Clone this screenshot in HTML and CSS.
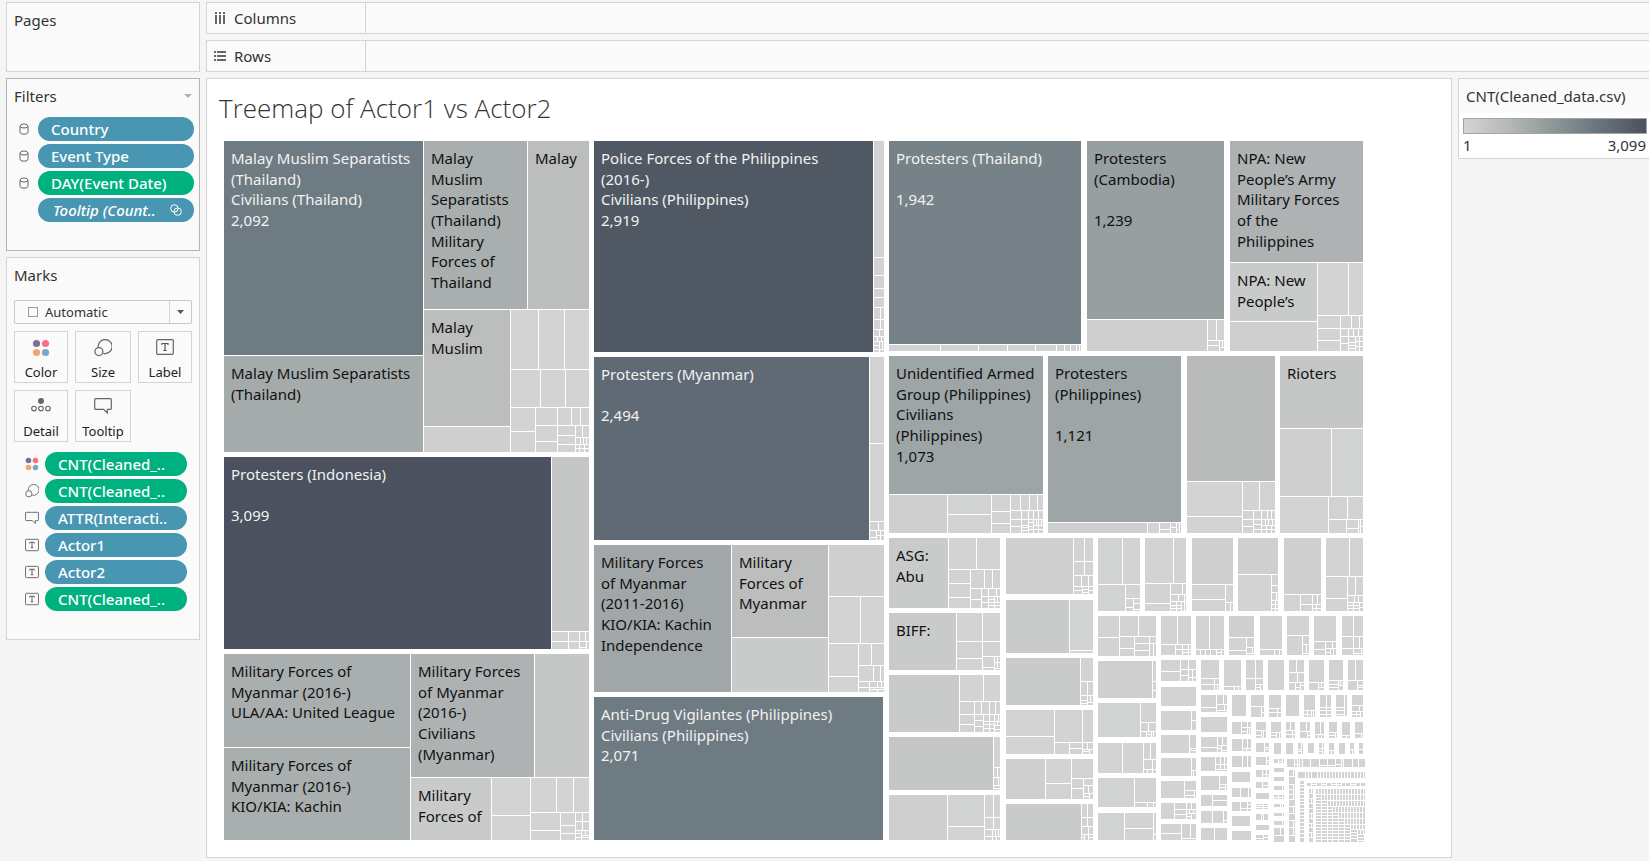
FILE: index.html
```html
<!DOCTYPE html>
<html lang="en">
<head>
<meta charset="utf-8">
<title>Treemap of Actor1 vs Actor2</title>
<link rel="stylesheet" href="styles.css">
</head>
<body>
<svg class="defs" aria-hidden="true">
  <symbol id="i-db" viewBox="0 0 10 12"><path d="M1 3.2V9.3Q1 11.2 5 11.2T9 9.3V3.2" fill="none" stroke="#666"/><ellipse cx="5" cy="3" rx="4" ry="2" fill="none" stroke="#666"/></symbol>
  <symbol id="i-color" viewBox="0 0 18 18"><circle cx="4.5" cy="4.5" r="3.6" fill="#836c96"/><circle cx="13.5" cy="4.5" r="3.6" fill="#f8707f"/><circle cx="4.5" cy="13.5" r="3.6" fill="#f2a477"/><circle cx="13.5" cy="13.5" r="3.6" fill="#7fa3cb"/></symbol>
  <symbol id="i-size" viewBox="0 0 18 18"><path d="M4.2 8.6A7 7 0 1 1 9.3 14.3" fill="none" stroke="#666" stroke-width="1.2"/><circle cx="4.9" cy="12.6" r="4" fill="none" stroke="#666" stroke-width="1.2"/></symbol>
  <symbol id="i-label" viewBox="0 0 18 16"><rect x=".7" y=".7" width="16.6" height="14.6" rx="1" fill="none" stroke="#666" stroke-width="1.2"/><path d="M6 6V4.5H12V6M9 4.5V11.5M7.4 11.5H10.6" fill="none" stroke="#555" stroke-width="1.2"/></symbol>
  <symbol id="i-detail" viewBox="0 0 20 14"><circle cx="10" cy="3" r="3" fill="#666"/><g fill="none" stroke="#666" stroke-width="1.1"><circle cx="3" cy="10.6" r="2.3"/><circle cx="10" cy="10.6" r="2.3"/><circle cx="17" cy="10.6" r="2.3"/></g></symbol>
  <symbol id="i-tip" viewBox="0 0 18 16"><path d="M1.6 .7H16.4Q17.3 .7 17.3 1.6V10.4Q17.3 11.3 16.4 11.3H13.4V15L9.6 11.3H1.6Q.7 11.3 .7 10.4V1.6Q.7 .7 1.6 .7Z" fill="none" stroke="#666" stroke-width="1.2"/></symbol>
  <symbol id="i-link" viewBox="0 0 12 12"><g fill="none" stroke="#fff"><circle cx="4.4" cy="4.4" r="3.7"/><circle cx="7.6" cy="7.6" r="3.7"/></g></symbol>
</svg>

<div class="workspace">
  <aside class="side">
    <section class="card pages"><h2>Pages</h2></section>

    <section class="card filters">
      <header><h2>Filters</h2><svg class="caret" viewBox="0 0 8 4"><path d="M0 0H8L4 4Z"/></svg></header>
      <ul class="pills">
        <li><svg class="db"><use href="#i-db"/></svg><button class="pill">Country</button></li>
        <li><svg class="db"><use href="#i-db"/></svg><button class="pill">Event Type</button></li>
        <li><svg class="db"><use href="#i-db"/></svg><button class="pill measure">DAY(Event Date)</button></li>
        <li><span class="db"></span><button class="pill tooltip"><span>Tooltip (Count..</span><svg class="link"><use href="#i-link"/></svg></button></li>
      </ul>
    </section>

    <section class="card marks">
      <h2>Marks</h2>
      <div class="mark-type">
        <select aria-label="Mark type"><option>Automatic</option></select>
        <i class="square"></i>
        <span class="drop"><svg viewBox="0 0 7 4"><path d="M0 0H7L3.500 4Z"/></svg></span>
      </div>
      <div class="shelf-buttons">
        <button><svg width="18" height="18"><use href="#i-color"/></svg>Color</button>
        <button><svg width="18" height="18"><use href="#i-size"/></svg>Size</button>
        <button><svg width="18" height="16"><use href="#i-label"/></svg>Label</button>
        <button><svg width="20" height="14"><use href="#i-detail"/></svg>Detail</button>
        <button><svg width="18" height="16"><use href="#i-tip"/></svg>Tooltip</button>
      </div>
      <ul class="pills">
        <li><svg class="kind"><use href="#i-color"/></svg><button class="pill measure">CNT(Cleaned_..</button></li>
        <li><svg class="kind"><use href="#i-size"/></svg><button class="pill measure">CNT(Cleaned_..</button></li>
        <li><svg class="kind"><use href="#i-tip"/></svg><button class="pill">ATTR(Interacti..</button></li>
        <li><svg class="kind"><use href="#i-label"/></svg><button class="pill">Actor1</button></li>
        <li><svg class="kind"><use href="#i-label"/></svg><button class="pill">Actor2</button></li>
        <li><svg class="kind"><use href="#i-label"/></svg><button class="pill measure">CNT(Cleaned_..</button></li>
      </ul>
    </section>
  </aside>

  <main class="main">
    <div class="shelf"><div class="shelf-name"><svg width="12" height="12" viewBox="0 0 12 12"><path d="M1 0h2v2h-2zM5 0h2v2h-2zM9 0h2v2h-2zM1 3h2v9h-2zM5 3h2v9h-2zM9 3h2v9h-2z"/></svg>Columns</div></div>
    <div class="shelf"><div class="shelf-name"><svg width="12" height="12" viewBox="0 0 12 12"><path d="M0 1h2v2h-2zM0 5h2v2h-2zM0 9h2v2h-2zM3 1h9v2h-9zM3 5h9v2h-9zM3 9h9v2h-9z"/></svg>Rows</div></div>
    <div class="view">
      <section class="sheet">
        <h1>Treemap of Actor1 vs Actor2</h1>
        <svg class="treemap" id="treemap" viewBox="0 0 1141 701" preserveAspectRatio="xMinYMin meet" role="img" aria-label="Treemap of Actor1 vs Actor2"></svg>
      </section>
      <aside class="legend">
        <h2>CNT(Cleaned_data.csv)</h2>
        <div class="scale">
          <div class="ramp"></div>
          <div class="ends"><span>1</span><span>3,099</span></div>
        </div>
      </aside>
    </div>
  </main>
</div>
<script src="treemap.js"></script>
</body>
</html>
```
FILE: styles.css
```css
* { box-sizing: border-box; }

body {
  margin: 0;
  background: #f5f5f5;
  color: #333;
  font-family: "Noto Sans", "Open Sans", sans-serif;
  font-size: 15px;
  line-height: 20px;
}

button, select { font: inherit; color: inherit; }
h1, h2, ul { margin: 0; padding: 0; font-weight: 400; }
h2 { font-size: 15px; line-height: 20px; }
ul { list-style: none; }
svg { flex: none; }
.defs { position: absolute; width: 0; height: 0; }

.workspace {
  display: flex;
  gap: 6px;
  min-height: 100vh;
  padding: 2px 0 3px 6px;
}

.side {
  width: 194px;
  flex: none;
  display: flex;
  flex-direction: column;
  gap: 6px;
}

.card {
  background: #fafafa;
  border: 1px solid #d4d4d4;
  padding: 7px;
}
.pages { min-height: 70px; }
.filters { min-height: 173px; border-color: #b4b4b4; padding-right: 5px; }
.filters header { display: flex; justify-content: space-between; align-items: center; padding-right: 2px; }
.caret { width: 8px; height: 4px; fill: #b0b0b0; }

.pills { display: flex; flex-direction: column; gap: 3px; }
.pills li { display: flex; align-items: center; }
.filters .pills { margin-top: 11px; }
.db { width: 10px; height: 12px; margin: 0 9px 0 5px; flex: none; }
.kind { width: 14px; height: 14px; margin-right: 6px; }

.pill {
  flex: 1;
  min-width: 0;
  height: 24px;
  padding: 0 13px;
  border: 0;
  border-radius: 12px;
  background: #4996b2;
  color: #fff;
  font-weight: 500;
  line-height: 24px;
  text-align: left;
  white-space: nowrap;
}
.pill.measure { background: #00b180; }
.pill.tooltip { display: flex; align-items: center; justify-content: space-between; font-style: italic; padding: 0 12px 0 15px; }
.link { width: 12px; height: 12px; }

.marks { min-height: 383px; }
.mark-type {
  position: relative;
  display: flex;
  margin-top: 15px;
  font-size: 13px;
}
.mark-type select {
  width: 100%;
  height: 24px;
  padding: 0 30px;
  border: 1px solid #c8c8c8;
  border-radius: 2px;
  background: #fafafa;
  appearance: none;
}
.square {
  position: absolute;
  left: 14px;
  top: 7px;
  width: 10px;
  height: 10px;
  border: 1px solid #999;
}
.drop {
  position: absolute;
  right: 1px;
  top: 1px;
  bottom: 1px;
  width: 22px;
  display: grid;
  place-items: center;
  border-left: 1px solid #d4d4d4;
  pointer-events: none;
}
.drop svg { width: 7px; height: 4px; fill: #555; }

.shelf-buttons {
  display: grid;
  grid-template-columns: 54fr 56fr 54fr;
  gap: 7px;
  margin-top: 7px;
}
.shelf-buttons button {
  display: flex;
  flex-direction: column;
  align-items: center;
  justify-content: space-between;
  height: 52px;
  padding: 7px 0 0;
  border: 1px solid #d4d4d4;
  background: #fafafa;
  font-size: 13px;
  line-height: 20px;
  color: #222;
}
.marks .pills { margin: 10px 5px 0 11px; }

.main {
  flex: 1;
  min-width: 0;
  display: flex;
  flex-direction: column;
  gap: 6px;
}
.shelf {
  display: flex;
  height: 32px;
  background: #fafafa;
  border: 1px solid #d4d4d4;
  border-right: 0;
}
.shelf-name {
  display: flex;
  align-items: center;
  gap: 8px;
  width: 159px;
  padding-left: 7px;
  border-right: 1px solid #d4d4d4;
}
.shelf-name svg { fill: #666; }

.view { flex: 1; display: flex; align-items: flex-start; gap: 6px; }
.sheet {
  flex: 1;
  align-self: stretch;
  min-width: 0;
  display: flex;
  flex-direction: column;
  padding: 13px 16px 15px 17px;
  background: #fff;
  border: 1px solid #d4d4d4;
}
h1 {
  margin: 0 0 17px -5px;
  font-family: "Open Sans", sans-serif;
  font-size: 26px;
  font-weight: 300;
  line-height: 32px;
}
.treemap { flex: 1 1 0; width: 100%; min-height: 400px; font-size: 15px; }
.treemap .tiles { shape-rendering: crispEdges; }
.treemap text { fill: #111; }
.treemap text.light { fill: #f2f2f2; }

.legend {
  width: 191px;
  flex: none;
  background: #fff;
  border: 1px solid #d4d4d4;
  border-right: 0;
}
.legend h2 { padding: 7px 7px 7px; background: #fafafa; white-space: nowrap; }
.scale { padding: 5px 2px 3px 4px; }
.ramp {
  height: 16px;
  border: 1px solid #a8a498;
  background: linear-gradient(90deg, #d4d4d4, #b4b8b7 25%, #8b9697 50%, #6b7780 72%, #4b515e);
}
.ends { display: flex; justify-content: space-between; padding: 1px 1px 0 0; }
```
FILE: treemap.js
```js
// Colour ramp of the measure, from low to high.
const ramp = {
  '.': '#d3d3d3', a: '#d1d3d2', b: '#cecfce', c: '#c9cbca', d: '#c5c7c6', e: '#bcbebd',
  f: '#b9bbba', g: '#aeb2b3', h: '#a9afae', i: '#a5abaa', j: '#a1a7a9', k: '#9da5a6',
  l: '#979fa0', m: '#778288', n: '#6f7b82', o: '#606a74', p: '#505963', q: '#4b515e'
};

// Each section has an origin in chart units. Its groups are "x0 y0 x1 y1 splits", in thirds of a unit.
// v/h cuts a cell at the given positions, and the cells that result follow in order;
// V/H does the same with plain cells only. A letter is a step of the ramp.
const sections = [
  { at: [-24, -81], groups: `
72 243 1167 1176 v670 h886 n i h748 v982 h e v931 h1099 e b h928,1042 V1015,1093 v1021,1096 . . a v1006 H1113 v1072 H1096,1143 h1096 V1114,1141 v1126 H1126,1152 h1132 V1147 h1152 V1141,1150,1159 v1137,1153 H1165 H1165 H1165` },
  { at: [-24, 299], groups: `
72 51 1167 627 v1054 q h574 d v1105,1138 H604 H604 h604 V1156 v1160 H622 .
72 642 1167 1200 v631 h922 h h h1012 v1003 g d v874 c v991 H1126 h1117 V1070,1120 v1081 H1171 v1126 H1156,1180 h1144 V1147 h1171 V1147 v1144 H1180,1192 h1186 V1156 H1193` },
  { at: [356, -11], groups: `
42 33 912 666 v880 p h382,436,475,502,532,568,598,619,634 a . . . . V901 V901 V898 V892,904 v898 H646,658 h658 V907 .
42 681 912 1230 v868 o h940 a h1174 . h1201 V895 v889 H1222 v901 H1216 H1216` },
  { at: [356, 389], groups: `
42 45 912 486 v454 j v745 h322 e c h199 b h340 V841 v835 H439 h406 V874 h454 V880,901 v868 H471 h471 V892,904 h478 . V892
42 501 909 930 n` },
  { at: [656, -11], groups: `
27 33 603 663 h643 m V181,295,382,466,529,553,571,589,598
27 678 489 1209 h1093 k v202 b v334 h1153 a a v391 H1144,1180 h1141 V421,448,472 v424,445,460,475 h1169 . H1190 h1169 . H1186,1193,1201 h1169 . H1177,1189,1199 h1169 . h1186 V468 H1198 h1169 . h1186 V483 H1198` },
  { at: [906, -11], groups: `
-246 678 153 1209 h1177 k v52,88,121,139 b . H1198 H1192 v148 H1198 .
-129 33 282 663 h568 l v232 b h631 V259 v268 H646 h652 V277 .
300 33 699 663 h397 g v562 h574 c b h556 V655 v631 H595,631 h595 V664,688 h619 V655,670,685 v655 H640 v676 H637,646,655 v688 H634,650 H634,650
171 678 435 1209 h1054 f v337 H1159 h1141 v388 . a h1168 V370,394,412,424 v370 H1189 v394 H1183,1198 h1186 V406,415,426 h1198 V408,424 V408,424
450 678 699 1209 h895 d h1099 v604 b a v595 . h1168 v652 a . v649 . v685 H1195 v691 H1189 H1189` },
  { at: [656, 389], groups: `
27 24 360 234 v205 c h118 V289 v271 H160,201 h175 V313,337 v304 H208 h199 V325,349 v325 H218 v343 H208,217,226 h217 V352 H226
27 249 360 420 v229 c v307 h334,385 . a . h334 . h379 . v343 H412 h397,415 V352 V352 .
27 435 360 606 v238 c h514 V310 v283 H553,583 h553 V304,328,346 v310 H571,589 v328 H574,583,595 v343 H574,583,595 h574 V355 h586 V352 H598
27 621 360 780 v340 d h712 . h742,766 V352 V355 H775
27 795 360 930 v202 b v313 h889 a . h862 V340 h898 V340 h919 V337,346,355 V337,349
378 24 639 192 v580 b h94 V613 h136 V613 h169 V604,625 v607 H181 v625 H178,187 H181
378 210 639 369 v568 c h361 a .
378 384 639 525 v601 c h454 . v622 H496,511,520 h496 . h517 V631 .
378 540 639 672 v523 H619 h637 V607 v568 . v607 H655 h658 V622 v628 H664 .
378 687 639 807 v496 b v574 h760 . a h745 a v610 H775 h766 . h790 V624 v628 H799 .
378 822 639 930 v604 c h862 V622 h889 V622 h913 V625 v613,625 H922 . H922` },
  { at: [866, 389], groups: `
24 24 150 243 h163 v97 a . v106 a h205 . v130 H232 H220,238
165 24 288 243 h160 V250 v241 H220 h193 V277 h214 V265,283 v259 H226,235 v274 H226,235 V283
306 24 429 243 h163 b v406 h208 . a h217 . V421
444 24 564 243 h133 b v544 . h166,187,211 . . V559 v555 H222,235 H222,235
582 24 693 243 h193 b v631 . v667 H223 h223 V682 v680 H235 H235
708 24 819 243 h139 V778 v772 H205 h196 V796 h217 V793,806 v790,808 H226,235 H226,235 H232
24 258 198 378 v88 H322 h319 v145 a . v133 H355 v178 H340,361 h340 . V190
213 258 303 375 h343 v262 . a v256 . v277 H359 v295 H358,367 H358,367
318 258 402 375 h358 V358 v331,346,361,379 . . . . v393 H366 .
417 258 492 375 h322 b v469 H361 h352 . h370 V487 .
510 258 576 375 h358 . V553,568
591 258 657 375 h316 . v637 . h343 . h370 V649 .
672 258 738 375 h334 . v706 H358 h355 V727 v721 H366 V730
756 258 819 375 h319 V790 h355 V790,808 v790 . h370 V814 .
24 393 198 504 v187 b H454,481
213 390 318 453 v271 H424 h418 V295 v295 H436 h442 V307 V307
333 390 387 480 h445 . v373 H463 h463 . V382
402 390 453 480 h469 . V433,445
468 390 519 480 h445 V496 v496 . h463 . v511 H472 .
534 390 582 480 .
597 390 642 480 h427 V619 h457 V622 v616 . v631 H472 H466
657 390 702 480 h457 . v685 . h472 V694 .
717 390 759 480 h451 a v745 H463,472 h466 V751 .
774 390 819 480 h451 V796 v802 . H466,473` },
  { at: [866, 539], groups: `
213 21 318 78 .
24 69 198 171 v151 a h127 . h154 V175 v169 . v184 H163 V190
213 93 318 150 v304 . H121
24 189 198 279 v97,160 . . h238 V181 h268 V187 V172,187
213 165 318 219 v298 . h205 . H211
213 234 318 288 v304 . h271 . V310
24 294 198 381 v133 a h367 . V172,190
213 303 318 354 v283 . h331 . v313 H346 .
213 369 318 417 v253 . h388 V289,304 v289 H403 h400 V298,310 v304 H409 .
24 399 198 480 v103 a v190 H445 H463
213 432 318 480 v274 H460 h475 V301 .
333 45 411 96 v379 H82 h73 V400 h91 V403 .
333 111 411 156 .
333 171 411 216 v382 H202 h196 V397 v394 H205 H211
333 231 411 273 v376 . h253 V391,403 h268 V391,403 .
333 288 411 330 v388 . h313 . v406 H322 .
333 345 411 378 v367 . H360
333 393 411 429 v367,400 . . H421
333 444 411 480 V373
426 45 468 108 a
483 45 522 111 h79 . v514 . H96
537 45 573 111 h85 . v562 H97 H97
588 45 627 108 .
642 45 675 111 h91 . v652,664 H103 H103 V670
690 45 723 111 v709 H81,91,103 H81,91,103
738 45 771 108 v763 H81,91,103 .
786 45 819 111 h76 . h94 V808 v799,811 H103 H103 .
426 126 483 162 v454 . h142 V472 v472 H155 V478
498 126 528 174 h151 . v514,520 H165 . .
543 126 573 174 h157 . v559 H167 V568
588 126 615 174 h151 V601 v607 H163 H163
630 126 660 174 h154 V649 v652 . H166
675 126 702 174 h163 V691 V685,694
717 126 741 174 h157 . v736 H166 .
756 126 780 174 h166 . V768
795 126 819 174 h160 . V814
426 177 483 213 v457 . h205 V472 V469
426 228 483 261 V457,472
426 276 480 306 .
426 324 483 351 V451,475
426 366 483 393 v451 . v472 H385 H373,385
426 408 480 438 .
426 453 483 480 .
498 189 537 216 v523 . H202,208
498 231 537 255 v529 . H240,247
498 270 537 291 v517 . h282 V529 V529
498 306 534 324 v517 . H316
498 339 537 357 .
498 372 534 387 v520 H376,382 H376,382
498 402 534 420 v514 . V520
498 435 537 450 .
498 465 534 480 v520 H475 H472
552 189 573 222 .
588 189 609 222 .
624 189 639 222 v634 H208,214 .
654 189 672 219 .
687 189 702 222 v697 H205,214 H205
717 189 732 222 h210 . V724
747 189 765 222 .
780 189 792 222 h208 . V787
807 189 819 222 H208
552 237 582 249 v565,577 . H243 .
552 264 582 276 .
552 291 582 303 .
552 318 582 330 V577
552 345 582 357 v565,577 H351 H351 .
552 372 582 381 V571,577
552 399 582 408 V577
552 423 582 435 V577
552 444 582 465 V571
552 468 582 486 .
591 237 825 261 v613,637,661,688,712,736,760,787,805 . v622,628 H252 H252 . . . H256 H256 v754 H252 . . . .
597 270 615 486 h289,313,328,343,358,379,400,421,442,466 V610 . V610 V610 V610 . V610 . V610 V610 .
624 276 825 294 V646,655,664,682,691,700,709,718,727,736,745,754,763,772,781,793,802,811,820
630 303 642 486 H313,322,334,343,355,364,373,385,394,406,415,427,439,448,460,472
651 309 825 318 v664,679,694,709,724,739,754,766,781,796,811 . H313 . H313 . H313 H313 . . H313 . .
657 327 669 486 h340,355,370,385,400,415,430,442,457,472 V664 . V664 . . V664 . V664 . V664 .` }
];

// The smallest actors fold into an inward staircase of thin strips.
const stairX = [678, 696, 714, 729, 747, 765, 783, 804];
const stairY = [327, 345, 363, 381, 399, 417, 435, 450];
const cuts = (from, to, step) => {
  const list = [];
  for (let p = from + step - 2; p < to - 3; p += step) list.push(p);
  return list.join(',');
};
for (let i = 0; i < 8; i++) {
  const x = stairX[i], y = stairY[i], below = stairY[i + 1] || 465;
  const group = sections[sections.length - 1];
  group.groups += `\n${x} ${y} 825 ${below - 3} V${cuts(x, 825, 9)}`;
  group.groups += `\n${x} ${below} ${(stairX[i + 1] || 825) - 3} 486 H${cuts(below, 486, 9)}`;
}

// Labels: x, y of the tile, then its lines. Light text on the dark tiles.
const labels = [
  [0, 0, 1, 'Malay Muslim Separatists|(Thailand)|Civilians (Thailand)|2,092'],
  [200, 0, 0, 'Malay|Muslim|Separatists|(Thailand)|Military|Forces of|Thailand'],
  [304, 0, 0, 'Malay'],
  [200, 169, 0, 'Malay|Muslim'],
  [0, 215, 0, 'Malay Muslim Separatists|(Thailand)'],
  [0, 316, 1, 'Protesters (Indonesia)||3,099'],
  [0, 513, 0, 'Military Forces of|Myanmar (2016-)|ULA/AA: United League'],
  [0, 607, 0, 'Military Forces of|Myanmar (2016-)|KIO/KIA: Kachin'],
  [187, 513, 0, 'Military Forces|of Myanmar|(2016-)|Civilians|(Myanmar)'],
  [187, 637, 0, 'Military|Forces of'],
  [370, 0, 1, 'Police Forces of the Philippines|(2016-)|Civilians (Philippines)|2,919'],
  [370, 216, 1, 'Protesters (Myanmar)||2,494'],
  [370, 404, 0, 'Military Forces|of Myanmar|(2011-2016)|KIO/KIA: Kachin|Independence'],
  [508, 404, 0, 'Military|Forces of|Myanmar'],
  [370, 556, 1, 'Anti-Drug Vigilantes (Philippines)|Civilians (Philippines)|2,071'],
  [665, 0, 1, 'Protesters (Thailand)||1,942'],
  [863, 0, 0, 'Protesters|(Cambodia)||1,239'],
  [1006, 0, 0, 'NPA: New|People’s Army|Military Forces|of the|Philippines'],
  [1006, 122, 0, 'NPA: New|People’s'],
  [665, 215, 0, 'Unidentified Armed|Group (Philippines)|Civilians|(Philippines)|1,073'],
  [824, 215, 0, 'Protesters|(Philippines)||1,121'],
  [1056, 215, 0, 'Rioters'],
  [665, 397, 0, 'ASG:|Abu'],
  [665, 472, 0, 'BIFF:']
];
const baselines = [23, 44, 64, 85, 106, 126, 147];

const svgNS = 'http://www.w3.org/2000/svg';
const chart = document.getElementById('treemap');
const make = (name, attrs, parent) => {
  const el = document.createElementNS(svgNS, name);
  for (const key in attrs) el.setAttribute(key, attrs[key]);
  parent.appendChild(el);
  return el;
};

const tiles = make('g', { class: 'tiles' }, chart);

function drawCell(tokens, x0, y0, x1, y1, at) {
  const token = tokens.length ? tokens.shift() : '.';
  const kind = token[0];
  if (!/[vh]/i.test(kind) || token.length === 1) {
    if (x1 > x0 && y1 > y0) {
      make('rect', { x: x0 + at[0], y: y0 + at[1], width: x1 - x0, height: y1 - y0, fill: ramp[kind] }, tiles);
    }
    return;
  }
  const across = kind.toLowerCase() === 'v';
  const plain = kind === 'V' || kind === 'H';
  const stops = token.slice(1).split(',').map(n => Math.floor(n / 3));
  let start = across ? x0 : y0;
  for (const stop of [...stops, across ? x1 : y1]) {
    const rest = plain ? ['.'] : tokens;
    if (across) drawCell(rest, start, y0, stop, y1, at);
    else drawCell(rest, x0, start, x1, stop, at);
    start = stop + 1;
  }
}

for (const section of sections) {
  for (const line of section.groups.trim().split('\n')) {
    const tokens = line.trim().split(' ');
    const [x0, y0, x1, y1] = tokens.splice(0, 4).map(n => Math.round(n / 3));
    drawCell(tokens, x0, y0, x1, y1, section.at);
  }
}

for (const [x, y, light, lines] of labels) {
  const text = make('text', light ? { class: 'light' } : {}, chart);
  lines.split('|').forEach((line, i) => {
    if (line) make('tspan', { x: x + 7, y: y + baselines[i] }, text).textContent = line;
  });
}
```
